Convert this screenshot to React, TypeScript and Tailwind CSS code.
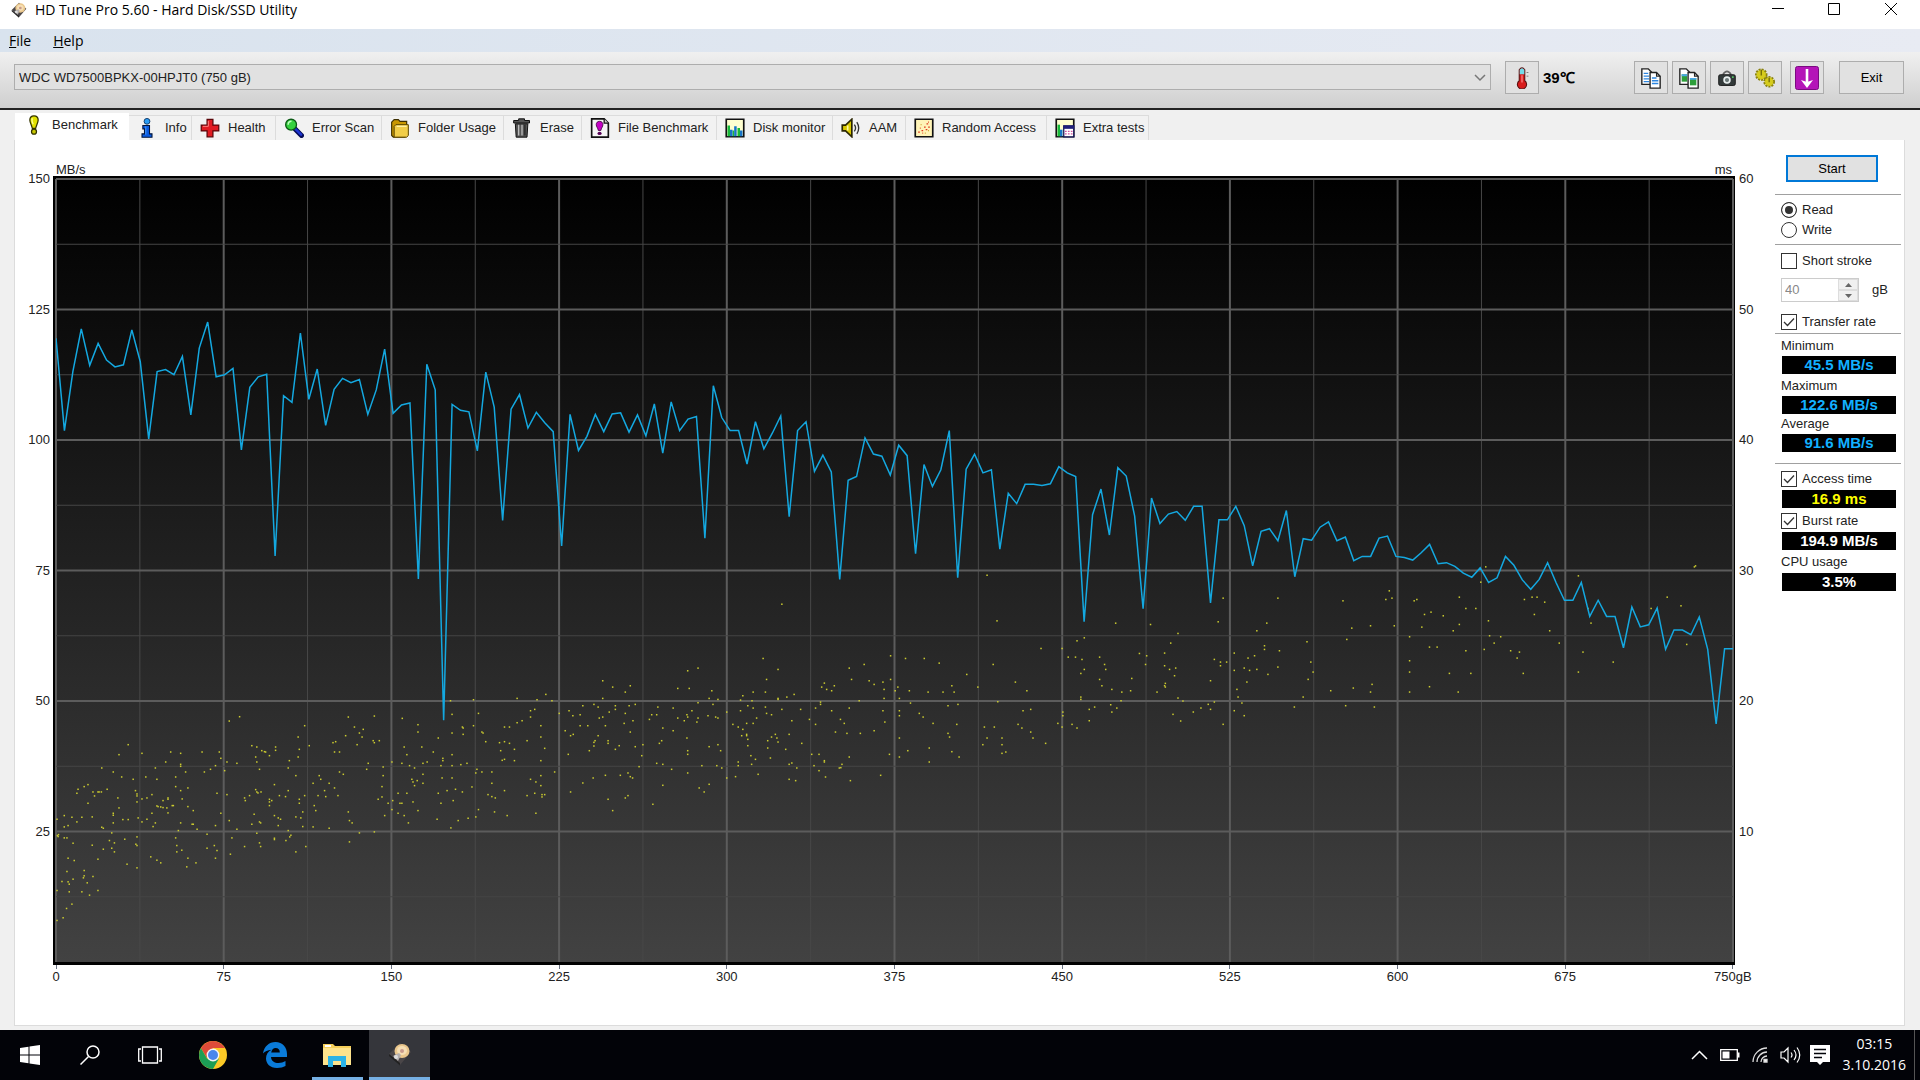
import React, { useState } from "react";

// MB/s, evenly spread over the whole disk
const TRANSFER_RATES = [
  119.5, 101.8, 113.1, 121.3, 114.3, 118.5, 115.3, 114, 114.4, 121.1, 115, 100.2, 113.1, 113.5, 112.5, 116, 104.8, 117.6, 122.6, 112.1,
  112.5, 113.7, 98.1, 110.1, 112.1, 112.6, 77.8, 108.5, 107.2, 120.5, 107.8, 113.6, 102.8, 109.7, 111.8, 111, 111.6, 104.9, 109.6, 117.4,
  105.1, 106.7, 107.1, 73.4, 114.5, 109.6, 46.3, 106.8, 105.7, 105.4, 97.9, 113, 106.3, 84.6, 105.9, 108.7, 102.3, 105.3, 103.3, 101.6,
  79.7, 104.9, 98, 100.7, 104.9, 101.6, 105, 105.2, 101.5, 104.8, 100.8, 106.9, 97.5, 107.3, 101.8, 104, 104.5, 81.2, 110.4, 104.3,
  101.8, 101.8, 95.4, 103.5, 98.3, 101.3, 104.6, 85.3, 101.8, 103.5, 94, 97.1, 93.9, 73.3, 92.3, 93, 100.4, 97.3, 96.9, 93.3,
  99, 97, 78.2, 95.3, 91.1, 94.3, 101.8, 73.6, 94.4, 97.3, 93.7, 94.3, 79.1, 89.8, 87.8, 91.5, 91.5, 91.3, 91.6, 94.9,
  93.7, 93, 65.2, 85.7, 90.6, 81.8, 94.7, 93.1, 85.4, 67.7, 88.9, 84, 85.8, 86.3, 84.6, 87.3, 87.3, 68.8, 84.7, 84.7,
  87.3, 83.6, 75.9, 82.5, 83, 80.7, 86.5, 73.8, 81.1, 80.8, 83.3, 84.3, 80.7, 81.4, 76.9, 77.7, 77.7, 81.2, 81.6, 77.7,
  77.5, 77, 78.4, 80, 76.3, 76.5, 75.8, 74.5, 73.7, 75.5, 72.7, 73.6, 77.7, 76, 73.2, 71.4, 73.3, 76.5, 72.7, 69.3,
  69.3, 72.7, 66.2, 69.3, 66.2, 66.2, 60.2, 68, 64.2, 64.6, 67.8, 59.9, 63.6, 63.6, 62.7, 66.1, 59.9, 45.6, 60, 60
];

// Access time samples, packed as "x,y" steps from the start of each zone
const ACCESS_ZONES = [
  {
    gb: -25.4,
    ms: 23.19,
    points:
      "149,782 165,774 174,746 188,733 149,692 149,478 150,527 153,524 152,530 168,467 168,501 178,497 168,534 175,534 191,550 188,472 201,486 214,472 241,471 201,400 204,388 220,380 230,374 243,396 247,408 256,396 259,396 265,396 280,388 230,430 266,324 296,336 318,351 348,358 311,284 335,254 371,280 308,414 311,444 296,460 296,466 296,489 266,502 270,505 292,519 321,479 335,479 361,474 354,392 358,402 358,408 358,426 371,417 384,414 397,404 371,486 384,478 397,460 400,500 406,489 381,351 410,358 406,324 433,306 446,276 472,280 472,313 472,319 459,351 485,336 459,380 472,392 491,384 476,417 439,414 439,418 426,422 410,438 413,440 420,441 426,443 436,444 450,437 453,437 439,459 491,440 505,452 472,489 466,512 502,493 505,493 515,508 541,523 563,497 358,531 326,538 286,542 299,549 292,565 299,576 270,568 241,556 256,598 178,595 194,602 175,635 191,658 162,665 178,666 181,673 181,696 220,632 220,648 218,654 228,669 243,650 214,696 234,706 256,692 332,613 358,624 394,591 410,601 420,609 355,553 358,557 459,534 462,557 462,576 475,571 491,595 488,621 512,609 541,565 560,557 567,572 563,595 602,583 606,534 619,508 599,482 577,460 567,400 593,404 534,336 550,328 563,317 577,295 573,276 528,276 593,306 619,310 587,332 599,183 626,170 658,257 671,261 684,272 691,275 694,276 704,287 720,261 720,271 668,291 671,306 678,328 717,374 668,389 671,396 674,399 682,396 652,407 639,414 641,422 704,418 704,426 710,422 704,437 730,407 746,410 753,392 664,463 658,493 678,486 681,489 717,467 727,474 733,478 727,497 753,512 760,526 757,531 747,542 717,535 717,539 671,520 678,549 681,560 639,560 773,576 799,560 773,471 786,474 791,456 791,500 782,418 782,430 796,407 773,347 753,324 756,302 779,291 782,268 779,231 796,197 808,257 818,370 834,347 838,358 860,370 874,384 831,407 848,392 851,410 883,407 821,437 825,452 818,501 860,505 887,336 897,343 874,276 887,276 870,248 877,245 903,227 910,171 926,201 949,208 939,219 946,231 933,254 978,168 975,242 978,248 991,242 962,310 958,328 1001,321 1001,347 998,380 998,411 988,418 910,456 913,482 920,489 939,519 913,546 978,516 1005,467 1014,430 1026,422 1024,449 1040,400 1045,430 1050,430 1040,460 1056,467 1067,489 1063,400 1079,426 1092,452 1024,306 1050,310 1056,261 1063,284 1070,317 1083,324 1076,358 1079,366 1090,362 1083,377 1105,343 1105,370 1105,310 1116,306 1102,261 1132,276 1145,234 1051,175 1092,194 1092,216 1177,122 1181,163 1181,219 1237,119 1250,160 1237,197 1208,201 1210,204 1210,223 1259,216 1262,219 1269,245 1181,284 1157,295 1157,302 1152,317 1181,317 1204,314 1220,310 1155,354 1181,354 1168,392 1190,388 1208,396 1233,381 1145,400 1152,430 1184,422 1142,478 1178,504 1197,482 1223,475 1243,471 1250,449 1246,328 1243,339 1259,336 1285,336 1285,370 1275,404 1285,410 1294,414 1318,392 1292,456 1325,467 1305,248 1318,245 1331,250 1308,272 1344,268 1312,301 1318,298 1344,302 1318,201 1331,201 1351,188 1364,182 1351,115 1403,119 1426,103 1442,122 1386,152 1397,148 1386,171 1413,197 1377,242 1413,231 1423,265 1413,302 1413,347 1386,358 1400,366 1413,377 1397,400 1377,407 1416,404 1423,404 1416,411 1400,460 1449,336 1461,160"
  },
  {
    gb: 225,
    ms: 26.25,
    points:
      "24,272 34,287 14,332 28,347 35,343 22,403 28,516 60,489 53,284 60,257 53,317 73,317 89,253 100,261 112,182 112,235 138,201 103,294 112,291 119,317 129,276 145,257 145,268 171,280 171,216 184,197 181,257 197,253 168,310 191,302 184,336 100,347 92,362 89,367 89,378 77,392 126,362 126,370 145,388 155,377 197,380 217,374 214,407 207,440 178,459 158,466 119,466 87,474 184,470 190,474 178,527 171,534 126,538 138,572 243,553 269,496 234,298 240,284 253,284 256,261 296,264 269,324 296,332 266,362 260,370 253,430 269,433 292,448 308,205 338,205 334,152 361,144 397,212 390,235 413,238 361,248 400,253 345,272 332,284 334,291 325,302 308,294 361,294 358,306 387,287 407,291 413,294 332,354 334,392 334,403 390,380 413,374 420,392 371,437 410,437 423,444 334,459 364,504 377,516 390,493 436,276 436,474 459,470 452,313 466,321 472,272 472,240 478,227 502,242 505,216 491,257 505,264 514,294 505,310 488,310 478,328 475,347 488,343 488,347 491,358 491,377 499,407 511,418 501,433 466,426 466,437 518,463 531,115 570,148 540,178 537,216 537,261 540,280 553,284 570,235 570,238 593,231 580,268 612,223 629,268 606,302 599,343 563,343 553,351 567,354 570,366 543,362 543,384 550,414 590,388 632,370 599,433 606,429 619,444 599,478 616,482 652,298 658,403 677,403 664,437 677,452 691,422 691,426 694,471 668,264 681,246 681,253 668,313 684,201 691,189 697,208 710,212 717,197 710,272 756,144 795,133 762,178 808,182 821,193 844,186 864,178 864,107 847,208 847,235 844,272 782,242 756,264 733,298 743,310 720,336 750,340 785,340 821,332 849,306 756,411 737,433 730,444 734,443 759,482 838,466 861,403 876,212 883,201 887,235 887,272 887,287 887,354 909,392 887,411 913,212 916,249 903,115 952,115 991,129 962,216 1001,216 1024,197 1030,216 939,280 949,291 975,310 1014,257 1040,253 1037,313 1014,340 1018,351 965,384 965,426 1024,395 1043,411 1063,163 1092,201 1132,133 1116,-135 580,-48 1142,2 1190,186 1220,212 1144,245 1210,272 1230,268 1109,321 1135,321 1116,354 1105,374 1155,354 1155,374 1155,400 1165,396 1197,313 1207,324 1230,336 1236,354 1269,370 1257,85 1312,85 1370,53 1351,62 1328,111 1347,111 1364,118 1370,148 1361,160 1410,111 1423,133 1426,148 1410,178 1416,197 1442,208 1452,9 1543,13 1514,100 1533,107 1530,133 1494,175 1491,212 1468,216 1466,242 1439,254 1455,264 1442,276 1397,261 1383,268 1361,231 1361,238 1314,276 1314,287 1301,310 1312,321 1338,313 1351,324 1383,302 1560,216"
  },
  {
    gb: 493.4,
    ms: 41.56,
    points:
      "28,669 47,640 12,699 12,737 25,748 41,744 38,767 14,790 12,797 14,801 47,834 60,843 34,883 54,903 87,876 107,864 126,853 132,868 142,846 132,782 142,718 158,726 158,737 174,726 152,605 165,534 165,913 194,699 194,751 201,808 204,831 214,849 194,872 220,887 227,786 220,744 234,751 230,714 247,707 253,748 253,632 279,609 308,534 273,677 273,688 312,692 308,741 282,763 351,861 374,831 384,665 394,726 400,756 387,778 446,812 478,542 501,624 488,658 505,804 485,857 550,617 554,793 550,816 560,861 599,512 606,534 590,538 612,617 652,650 652,722 652,756 652,816 664,542 671,538 691,583 708,576 684,621 704,681 724,681 704,800 740,587 782,531 799,565 825,565 782,613 766,632 756,760 799,692 812,760 779,816 858,602 847,688 838,486 851,440 861,647 890,650 873,669 916,692 939,696 933,714 949,760 952,538 972,531 985,531 1005,546 978,583 1018,632 1043,669 1093,467 1118,565 1126,609 1105,696 1093,756 1184,726 1283,565 1325,531 1361,557 1376,673 1396,440 1399,437"
  }
];

const GB_STEP = 0.1712;
const MS_STEP = 0.02551;

const accessSamples = ACCESS_ZONES.flatMap(zone =>
  zone.points.split(" ").map(p => {
    const [x, y] = p.split(",").map(Number);
    return { gb: zone.gb + x * GB_STEP, ms: zone.ms - y * MS_STEP };
  })
);

const ratePoints = TRANSFER_RATES.map((v, i) => `${((i * 750) / (TRANSFER_RATES.length - 1)).toFixed(2)},${(150 - v).toFixed(1)}`).join(" ");

const Svg = ({ size = 22, box = 24, children }: { size?: number; box?: number; children: React.ReactNode }) => (
  <svg width={size} height={size} viewBox={`0 0 ${box} ${box}`} fill="none" className="shrink-0" aria-hidden="true">
    {children}
  </svg>
);

const DiskIcon = ({ size }: { size: number }) => (
  <Svg size={size}>
    <path d="M1 12 12 1l11 9-11 13z" fill="#4a4648" />
    <path d="m1 12 11 9v2.500L1 14z" fill="#222" />
    <ellipse cx="14" cy="9" rx="7.500" ry="7" fill="#e9c68c" />
    <ellipse cx="14" cy="8.500" rx="5" ry="4.500" fill="#f6dfb4" />
    <circle cx="14" cy="9" r="2" fill="#c99a8c" />
    <path d="m5 14 6-3 2 2-3 6z" fill="#b5b0ae" />
    <circle cx="8" cy="15" r="2" fill="#ddd" />
  </Svg>
);

const Exclamation = () => (
  <Svg size={20}>
    <path d="M12 1c3.500 0 5 2 5 5 0 3-2 6-3 10h-4C9 12 7 9 7 6c0-3 1.500-5 5-5z" fill="#e2e200" stroke="#333300" strokeWidth="1.500" />
    <path d="M10 4c-1 2 0 5 1 7" stroke="#ffffa0" strokeWidth="1.500" />
    <circle cx="12" cy="20" r="3" fill="#c8c800" stroke="#333300" strokeWidth="1.500" />
  </Svg>
);

const InfoIcon = () => (
  <Svg size={20}>
    <circle cx="12" cy="4" r="3.500" fill="#2a9df4" stroke="#052a55" />
    <path d="M7 9h8v10h3v4H6v-4h3v-6H7z" fill="#0b5be0" stroke="#03153a" strokeWidth="1.300" />
    <path d="M10.500 10v10" stroke="#56a6ff" />
  </Svg>
);

const HealthIcon = () => (
  <Svg size={20}>
    <path d="M8.500 1.500h7v7h7v7h-7v7h-7v-7h-7v-7h7z" fill="#e11b22" stroke="#5a0508" strokeWidth="1.500" />
    <path d="M10 3.500V10H3.500" stroke="#ff8080" strokeWidth="1.200" />
  </Svg>
);

const MagnifierIcon = () => (
  <Svg size={20}>
    <path d="m13 13 8 8" stroke="#050b55" strokeWidth="6" strokeLinecap="round" />
    <path d="m13.500 13 7 7" stroke="#1c34d2" strokeWidth="3" strokeLinecap="round" />
    <circle cx="8.500" cy="8" r="6.500" fill="#35d13f" stroke="#0b5a15" strokeWidth="1.600" />
    <path d="M5 8a4 4 0 0 1 4-4" stroke="#bfffc0" strokeWidth="1.800" />
  </Svg>
);

const FolderIcon = () => (
  <Svg size={20}>
    <path d="M2 5 5 2h5l2 2h8v17l-2 2H4l-2-2z" fill="#c99700" stroke="#3c2e00" strokeWidth="1.400" />
    <path d="M7 8h15v13l-2 2H5V10z" fill="#f1cd48" stroke="#5a4500" strokeWidth="1.200" />
    <path d="M8 10h12" stroke="#fff2a8" strokeWidth="1.500" />
  </Svg>
);

const BinIcon = () => (
  <Svg size={20}>
    <path d="M8 3V1h7v2h6v3H2V3zM4 7h15l-1 16H5z" fill="#555" stroke="#111" strokeWidth="1.200" />
    <path d="M8 8v13M12 8v13" stroke="#bdbdbd" strokeWidth="1.600" />
    <path d="M15.500 8v13" stroke="#222" strokeWidth="1.500" />
  </Svg>
);

const FileBenchIcon = () => (
  <Svg size={20}>
    <path d="M2 1h15l5 5v17H2z" fill="#f5f5f5" stroke="#111" strokeWidth="2" />
    <path d="M17 1v5h5" fill="#ccc" stroke="#111" strokeWidth="1.500" />
    <path d="M11.500 4c2.500 0 4 1.500 4 4s-2 4-2.500 7h-3C9.500 12 7.500 10.500 7.500 8s1.500-4 4-4z" fill="#c400c4" stroke="#400040" />
    <ellipse cx="11.500" cy="18.500" rx="2.500" ry="2" fill="#550055" />
  </Svg>
);

const MonitorIcon = () => (
  <Svg size={20}>
    <path d="M1.500 1.500h21v21h-21z" fill="#ffffd0" stroke="#111" strokeWidth="2" />
    <path d="M3 9h3v13H3zM9 15h2v7H9zM15 12h3v10h-3z" fill="#16b83a" />
    <path d="M6 14h3v8H6zM11 10h3v12h-3zM18 15h3v7h-3z" fill="#1674c8" />
  </Svg>
);

const SpeakerIcon = () => (
  <Svg size={20}>
    <path d="M1.500 8.500h4L13 1.500v21l-7.500-7h-4z" fill="#d8c800" stroke="#2a2500" strokeWidth="2" />
    <path d="M8 9v6" stroke="#fff9a0" strokeWidth="2" />
    <path d="M16 8q3 4 0 8M19 5q4.500 7 0 14" stroke="#333" strokeWidth="1.600" />
  </Svg>
);

const ScatterIcon = () => (
  <Svg size={20}>
    <path d="M1.500 1.500h21v21h-21z" fill="#fff4b8" stroke="#111" strokeWidth="2" />
    <path d="M5 17h2M9 15h2M7 12h1M12 11h2M15 7h2M17 5h1M14 14h2M10 18h1M17 11h2" stroke="#e03a20" strokeWidth="1.500" />
    <path d="M8 8h1M13 18h1M17 15h1" stroke="#c89a20" strokeWidth="1.500" />
  </Svg>
);

const ExtraIcon = () => (
  <Svg size={20}>
    <path d="M1.500 1.500h21v21h-21z" fill="#ffffd0" stroke="#111" strokeWidth="2" />
    <path d="M3 8h3v14H3z" fill="#16b83a" />
    <path d="M6 14h3v8H6z" fill="#1674c8" />
    <path d="M10.500 9.500h12v13h-12z" fill="#fff" stroke="#111155" strokeWidth="1.500" />
    <path d="M10 9h13v4H10z" fill="#20207a" />
    <path d="M12 16h9M12 19h9" stroke="#d050a0" strokeWidth="1.500" strokeDasharray="2 1.500" />
  </Svg>
);

const ThermometerIcon = () => (
  <Svg>
    <path d="M9 3q3-4 6 0v12a5 5 0 1 1-6 0z" fill="#d91c1c" stroke="#5b1010" strokeWidth="1.200" />
    <path d="M9.500 3q2.500-3.500 5 0v5h-5z" fill="#73dcea" />
    <path d="M12 9v8" stroke="#ff8f8f" strokeWidth="1.300" />
    <path d="M17 6h2M17 10h2" stroke="#777" />
  </Svg>
);

const CopyIcon = ({ image }: { image?: boolean }) => (
  <Svg>
    <path d="M2 2h7l4 4v13H2z" fill="#fff" stroke="#222" strokeWidth="1.500" />
    {image ? <path d="M4 8h6v8H4z" fill="#2d9f3a" /> : <path d="M4 7h5M4 10h6M4 13h6M4 16h6" stroke="#2d86e0" strokeWidth="1.400" />}
    <path d="M11 6h7l4 4v13H11z" fill="#fff" stroke="#222" strokeWidth="1.500" />
    <path d="M18 6v4h4" stroke="#222" strokeWidth="1.200" />
    {image ? (
      <>
        <path d="M13 12h7v8h-7z" fill="#2d9f3a" />
        <path d="M4 8h6v2H4zM13 12h7v2h-7z" fill="#49a6e8" />
      </>
    ) : (
      <path d="M13 12h5M13 15h7M13 18h7" stroke="#2d86e0" strokeWidth="1.400" />
    )}
  </Svg>
);

const CameraIcon = () => (
  <Svg size={20}>
    <path d="M7 8q5-8 10 0" stroke="#666" strokeWidth="2" />
    <rect x="2" y="8" width="20" height="13" rx="2" fill="#333a3a" stroke="#111" />
    <circle cx="12" cy="14.500" r="4.500" fill="#e8eeee" />
    <circle cx="12" cy="14.500" r="2.500" fill="#6b7878" />
    <path d="M18 11h2" stroke="#52c060" strokeWidth="2" />
  </Svg>
);

const GearsIcon = () => (
  <Svg size={20}>
    <g fill="#d6cc1d" stroke="#8a820c">
      <circle cx="7.500" cy="8" r="6" strokeWidth="3" strokeDasharray="2.300 1.200" />
      <circle cx="7.500" cy="8" r="5" stroke="#d6cc1d" />
      <circle cx="17" cy="16.500" r="5.500" strokeWidth="3" strokeDasharray="2.300 1.200" />
      <circle cx="17" cy="16.500" r="4.500" stroke="#d6cc1d" />
    </g>
    <path d="M7.500 2v7M17 12v5" stroke="#6d6605" strokeWidth="1.500" />
  </Svg>
);

const DownIcon = () => (
  <Svg size={24}>
    <rect x="0.500" y="0.500" width="23" height="23" rx="2" fill="#b414b8" stroke="#7a0a80" />
    <path d="M12 3v14" stroke="#fff" strokeWidth="2.600" />
    <path d="m6 14 6 2 6-2-6 8z" fill="#fff" />
  </Svg>
);

const TABS = [
  { label: "Info", Icon: InfoIcon, width: "w-[63px]" },
  { label: "Health", Icon: HealthIcon, width: "w-[84px]" },
  { label: "Error Scan", Icon: MagnifierIcon, width: "w-[106px]" },
  { label: "Folder Usage", Icon: FolderIcon, width: "w-[122px]" },
  { label: "Erase", Icon: BinIcon, width: "w-[78px]" },
  { label: "File Benchmark", Icon: FileBenchIcon, width: "w-[135px]" },
  { label: "Disk monitor", Icon: MonitorIcon, width: "w-[116px]" },
  { label: "AAM", Icon: SpeakerIcon, width: "w-[73px]" },
  { label: "Random Access", Icon: ScatterIcon, width: "w-[141px]" },
  { label: "Extra tests", Icon: ExtraIcon, width: "w-[102px]" }
];

const TitleBar = () => (
  <header className="flex h-[29px] items-start justify-between bg-white font-['Open_Sans',sans-serif] text-sm text-black">
    <div className="flex h-5 items-center gap-2 pl-[11px]">
      <DiskIcon size={16} />
      <h1 className="leading-5">HD Tune Pro 5.60 - Hard Disk/SSD Utility</h1>
    </div>
    <div className="flex">
      <button aria-label="Minimize" className="flex h-[18px] w-14 items-center justify-center">
        <svg width="12" height="12">
          <path d="M0 5.500h12" stroke="#000" />
        </svg>
      </button>
      <button aria-label="Maximize" className="flex h-[18px] w-14 items-center justify-center">
        <svg width="12" height="12" fill="none">
          <path d="M.5.5h11v11H.5z" stroke="#000" />
        </svg>
      </button>
      <button aria-label="Close" className="flex h-[18px] w-[58px] items-center justify-center">
        <svg width="12" height="12">
          <path d="m0 0 12 12M12 0 0 12" stroke="#000" />
        </svg>
      </button>
    </div>
  </header>
);

const toolButton = "flex h-[33px] w-[34px] items-center justify-center border border-[#adadad] bg-[#e1e1e1]";

const Toolbar = () => (
  <div className="flex h-[58px] items-start border-b-2 border-[#222] bg-linear-to-b from-[#f0f0f0] to-[#cfcfcf] pt-[9px] pr-4 pl-[14px]">
    <div className="relative mt-[3px] h-[26px] flex-1">
      <select aria-label="Drive" className="h-full w-full appearance-none border border-[#adadad] bg-[#e1e1e1] px-1 pt-px text-[#222]">
        <option>WDC WD7500BPKX-00HPJT0 (750 gB)</option>
      </select>
      <svg width="12" height="8" fill="none" className="pointer-events-none absolute top-[10px] right-[5px]">
        <path d="m1 1 5 5 5-5" stroke="#777" strokeWidth="1.500" />
      </svg>
    </div>
    <button aria-label="Temperature" className={`${toolButton} ml-[14px]`}>
      <ThermometerIcon />
    </button>
    <span className="ml-1 w-[91px] text-[15px] leading-[33px] font-bold text-black">39℃</span>
    <div className="flex gap-1">
      <button aria-label="Copy text" className={toolButton}>
        <CopyIcon />
      </button>
      <button aria-label="Copy image" className={toolButton}>
        <CopyIcon image />
      </button>
      <button aria-label="Save screenshot" className={toolButton}>
        <CameraIcon />
      </button>
      <button aria-label="Options" className={toolButton}>
        <GearsIcon />
      </button>
    </div>
    <button aria-label="Minimize to tray" className={`${toolButton} ml-2`}>
      <DownIcon />
    </button>
    <button className="ml-[15px] h-[33px] w-[65px] border border-[#adadad] bg-[#e1e1e1] text-black">Exit</button>
  </div>
);

const Tabs = () => (
  <nav role="tablist" className="flex items-end px-[15px] pt-[3px]">
    <button role="tab" aria-selected="true" className="flex h-[27px] w-[114px] items-center gap-2 bg-white pb-1 pl-[9px]">
      <Exclamation />
      Benchmark
    </button>
    {TABS.map(({ label, Icon, width }) => (
      <button
        key={label}
        role="tab"
        aria-selected="false"
        className={`flex h-[25px] items-center gap-2 border-t border-r border-[#dcdcdc] bg-[#f2f2f2] pl-2 whitespace-nowrap ${width}`}>
        <Icon />
        {label}
      </button>
    ))}
  </nav>
);

const YAxis = ({ labels, align }: { labels: string[]; align: string }) => (
  <div className={`flex flex-col justify-between pt-[3px] pb-[3px] ${align}`}>
    {labels.map((l, i) => (
      <span key={i} className="flex h-0 items-center">
        {l}
      </span>
    ))}
  </div>
);

const Plot = () => (
  <div className="min-w-0 border-t-3 border-r-2 border-b-3 border-l-3 border-black bg-linear-to-b/srgb from-black to-[#424242]">
    <svg className="block h-full w-full overflow-visible" role="img" aria-label="Transfer rate and access time">
      {Array.from({ length: 21 }, (_, i) => (
        <line key={`v${i}`} x1={`${i * 5}%`} x2={`${i * 5}%`} y1="0" y2="100%" stroke={i % 2 ? "#484848" : "#5c5c5c"} strokeWidth={i % 2 ? 1 : 2} />
      ))}
      {Array.from({ length: 12 }, (_, i) => (
        <line
          key={`h${i}`}
          x1="0"
          x2="100%"
          y1={`${(i * 100) / 12}%`}
          y2={`${(i * 100) / 12}%`}
          stroke={i % 2 ? "#454545" : "#5c5c5c"}
          strokeWidth={i % 2 ? 1 : 2}
        />
      ))}
      <g fill="#cccc30">
        {accessSamples.map((s, i) => (
          <rect key={i} x={`${(s.gb / 7.5).toFixed(3)}%`} y={`${(100 - s.ms / 0.6).toFixed(3)}%`} width="1.5" height="1.5" />
        ))}
      </g>
      <svg width="100%" height="100%" viewBox="0 0 750 150" preserveAspectRatio="none">
        <polyline points={ratePoints} fill="none" stroke="#14a8e0" strokeWidth="1.500" vectorEffect="non-scaling-stroke" />
      </svg>
    </svg>
  </div>
);

const X_LABELS = ["0", "75", "150", "225", "300", "375", "450", "525", "600", "675", "750gB"];

const Chart = () => (
  <section className="grid min-w-0 flex-1 grid-cols-[38px_1fr_40px] grid-rows-[36px_1fr_60px] leading-4">
    <div />
    <div className="flex items-end justify-between pr-[3px] pl-[3px] leading-3">
      <span>MB/s</span>
      <span>ms</span>
    </div>
    <div />
    <YAxis labels={["150", "125", "100", "75", "50", "25", ""]} align="items-end pr-[3px]" />
    <Plot />
    <YAxis labels={["60", "50", "40", "30", "20", "10", ""]} align="items-start pl-1" />
    <div />
    <div className="flex justify-between pr-[2px] pl-[3px]">
      {X_LABELS.map(l => (
        <div key={l} className="flex w-0 flex-col items-center">
          <i className="h-1 w-px bg-gray-500" />
          <span>{l}</span>
        </div>
      ))}
    </div>
    <div />
  </section>
);

const Check = ({ label, initial = false }: { label: string; initial?: boolean }) => {
  const [checked, setChecked] = useState(initial);
  return (
    <label className="relative flex h-[22px] items-center gap-[5px] pl-[6px]">
      <input
        type="checkbox"
        checked={checked}
        onChange={e => setChecked(e.target.checked)}
        className="peer h-4 w-4 appearance-none border border-[#333] bg-white"
      />
      <svg width="16" height="16" fill="none" className="pointer-events-none absolute left-[6px] hidden peer-checked:block">
        <path d="m3 8 3.500 3.500L13 4.500" stroke="#333" strokeWidth="1.300" />
      </svg>
      {label}
    </label>
  );
};

const Mode = ({ label, defaultChecked }: { label: string; defaultChecked?: boolean }) => (
  <label className="flex h-5 items-center gap-[5px] pl-[6px]">
    <input
      type="radio"
      name="mode"
      defaultChecked={defaultChecked}
      className="h-4 w-4 appearance-none rounded-full border border-[#333] bg-white checked:bg-[#333] checked:shadow-[inset_0_0_0_3px_white]"
    />
    {label}
  </label>
);

const Value = ({ color, children }: { color: string; children: React.ReactNode }) => (
  <output className={`mr-[5px] ml-[7px] block h-[18px] bg-black text-center text-[15px] leading-[18px] font-bold ${color}`}>{children}</output>
);

const Rule = () => <hr className="border-[#a0a0a0]" />;

const SidePanel = () => (
  <aside className="flex w-[126px] shrink-0 flex-col pt-[15px]">
    <button className="mb-3 ml-[11px] h-[27px] w-[92px] border-2 border-[#0078d7] bg-[#e1e1e1] text-black">Start</button>
    <Rule />
    <fieldset className="pt-[5px] pb-1">
      <Mode label="Read" defaultChecked />
      <Mode label="Write" />
    </fieldset>
    <Rule />
    <div className="pt-[5px]">
      <Check label="Short stroke" />
    </div>
    <div className="mt-[6px] flex items-center gap-[13px] pl-[6px]">
      <div className="flex h-6 w-[78px] border border-[#ccc] bg-white">
        <input aria-label="Short stroke size" disabled defaultValue="40" className="w-0 flex-1 px-[3px] text-[#888]" />
        <div className="flex w-5 flex-col">
          <button aria-label="Increase" disabled className="flex flex-1 items-center justify-center border border-[#ddd] bg-[#f0f0f0]">
            <svg width="7" height="4">
              <path d="M0 4 3.500 0 7 4z" fill="#666" />
            </svg>
          </button>
          <button aria-label="Decrease" disabled className="flex flex-1 items-center justify-center border border-[#ddd] bg-[#f0f0f0]">
            <svg width="7" height="4">
              <path d="M0 0l3.500 4L7 0z" fill="#666" />
            </svg>
          </button>
        </div>
      </div>
      <span>gB</span>
    </div>
    <div className="mt-[9px]">
      <Check label="Transfer rate" initial />
    </div>
    <Rule />
    <p className="h-[22px] pl-[6px] leading-6">Minimum</p>
    <Value color="text-[#12b0ff]">45.5 MB/s</Value>
    <p className="h-[22px] pl-[6px] leading-6">Maximum</p>
    <Value color="text-[#12b0ff]">122.6 MB/s</Value>
    <p className="h-5 pl-[6px] leading-5">Average</p>
    <Value color="text-[#12b0ff]">91.6 MB/s</Value>
    <div className="h-[11px]" />
    <Rule />
    <div className="pt-1">
      <Check label="Access time" initial />
    </div>
    <Value color="text-[#ffff00]">16.9 ms</Value>
    <div className="pt-[2px]">
      <Check label="Burst rate" initial />
    </div>
    <Value color="text-white">194.9 MB/s</Value>
    <p className="h-[23px] pl-[6px] leading-6">CPU usage</p>
    <Value color="text-white">3.5%</Value>
  </aside>
);

const Taskbar = () => (
  <footer className="flex h-[50px] items-stretch bg-[#020308] font-['Open_Sans',sans-serif] text-sm text-white">
    <button aria-label="Start menu" className="flex w-[60px] items-center justify-center">
      <svg width="20" height="20" viewBox="0 0 20 20" fill="#fff">
        <path d="M0 3l8.500-1.200v7.700H0zM9.500 1.600 20 0v9.500H9.500zM0 10.500h8.500v7.700L0 17zM9.500 10.500H20V20L9.500 18.400z" />
      </svg>
    </button>
    <button aria-label="Search" className="flex w-[60px] items-center justify-center">
      <svg width="20" height="20" fill="none" stroke="#fff" strokeWidth="1.500">
        <circle cx="13" cy="7" r="6" />
        <path d="M8.500 11.500.5 19.500" />
      </svg>
    </button>
    <button aria-label="Task view" className="flex w-[60px] items-center justify-center">
      <svg width="24" height="18" fill="none" stroke="#fff" strokeWidth="1.300">
        <path d="M4.500 1h15v16h-15zM3 3H.7v12H3M21 3h2.300v12H21" />
      </svg>
    </button>
    <button aria-label="Chrome" className="flex w-[65px] items-center justify-center">
      <svg width="28" height="28" viewBox="0 0 28 28">
        <circle cx="14" cy="14" r="14" fill="#fbc926" />
        <path d="M14 7h12.100A14 14 0 0 0 1.900 7L8 17z" fill="#dd4b39" />
        <path d="M1.900 7A14 14 0 0 0 14 28l6-10.500-6 2.500-6-2.500z" fill="#1c9e55" />
        <circle cx="14" cy="14" r="6.400" fill="#f4f4f4" />
        <circle cx="14" cy="14" r="5" fill="#4a86ec" />
      </svg>
    </button>
    <button aria-label="Edge" className="flex w-[60px] items-center justify-center">
      <svg width="24" height="26" viewBox="0 0 24 26" fill="#0a7bd8">
        <path d="M0 11.500C1 4.500 6 0 12.500 0 19.500 0 24 5 24 12v3H8c.3 4 3.500 6 7.500 6 2.500 0 5-.7 7-2v5c-2.300 1.300-5 2-8.500 2C7 26 3 21.500 3 16.500 3 12.500 5 9.500 8.500 7.700 4.500 8 2 9.300 0 11.500zM8.200 10.500h8.600C16.800 7.500 15.300 6 12.700 6 10.200 6 8.600 7.800 8.200 10.500z" />
      </svg>
    </button>
    <button aria-label="File Explorer" className="ml-[7px] flex w-[51px] items-center justify-center border-b-3 border-[#76b0e4] pt-[2px] pr-[2px]">
      <svg width="28" height="24" viewBox="0 0 28 24">
        <path d="M0 1h10l2 2h16v19H0z" fill="#f5cf5a" />
        <path d="M0 5h28v17H0z" fill="#fde38c" />
        <path d="M2 2h6v2H2z" fill="#fff" />
        <path d="M5 13h18v11h-5v-6h-8v6H5z" fill="#2bb3e6" />
      </svg>
    </button>
    <button aria-label="HD Tune Pro" className="ml-[6px] flex w-[61px] items-center justify-center border-b-3 border-[#76b0e4] bg-[#35363b]">
      <DiskIcon size={24} />
    </button>
    <div className="ml-auto flex items-center">
      <button aria-label="Show hidden icons" className="mr-3">
        <svg width="17" height="10" fill="none" stroke="#fff" strokeWidth="1.500">
          <path d="m1 9 7.500-7.500L16 9" />
        </svg>
      </button>
      <svg width="20" height="12" fill="none" className="mr-3">
        <path d="M.7.700h16.600v10.600H.700z" stroke="#fff" strokeWidth="1.300" />
        <path d="M2.500 2.500h7v7h-7zM18 3.500h1.500v5H18z" fill="#fff" />
      </svg>
      <svg width="16" height="16" fill="none" stroke="#ddd" strokeWidth="1.300" className="mr-3">
        <path d="M1 15A14 14 0 0 1 15 1M5 15A10 10 0 0 1 15 5M9 15a6 6 0 0 1 6-6" />
        <path d="M12 12.500h3V15h-3z" fill="#fff" />
      </svg>
      <svg width="21" height="18" fill="none" stroke="#fff" strokeWidth="1.200" className="mr-[9px]">
        <path d="M1 6h3l4-4v14l-4-4H1zM11 6.500q2 2.500 0 5M14 4q4 5 0 10M17 1.500q5.500 7.500 0 15" />
      </svg>
      <button aria-label="Notifications" className="mr-[13px]">
        <svg width="20" height="20">
          <path d="M0 0h20v17h-7l-3 3-3-3H0z" fill="#fff" />
          <path d="M4 4.500h12M4 8.500h12M4 12.500h8" stroke="#020308" strokeWidth="1.500" />
        </svg>
      </button>
      <div className="mr-2 pb-[2px] text-center leading-[21px]">
        <p>03:15</p>
        <p>3.10.2016</p>
      </div>
      <div className="h-[50px] w-[6px] border-l border-[#555]" />
    </div>
  </footer>
);

export default function App() {
  return (
    <div className="flex min-h-screen flex-col bg-[#f0f0f0] font-['Liberation_Sans',Arial,sans-serif] text-[13px] text-[#222]">
      <TitleBar />
      <nav className="flex h-[23px] items-center gap-[22px] bg-linear-to-r from-[#d9e3ee] to-[#e8ebf3] pl-[9px] font-['Open_Sans',sans-serif] text-sm text-black">
        <button>
          <u>F</u>ile
        </button>
        <button>
          <u>H</u>elp
        </button>
      </nav>
      <Toolbar />
      <Tabs />
      <main className="mr-[15px] mb-1 ml-[14px] flex flex-1 border-x border-b border-[#dcdcdc] bg-white pr-[3px]">
        <Chart />
        <SidePanel />
      </main>
      <Taskbar />
    </div>
  );
}
